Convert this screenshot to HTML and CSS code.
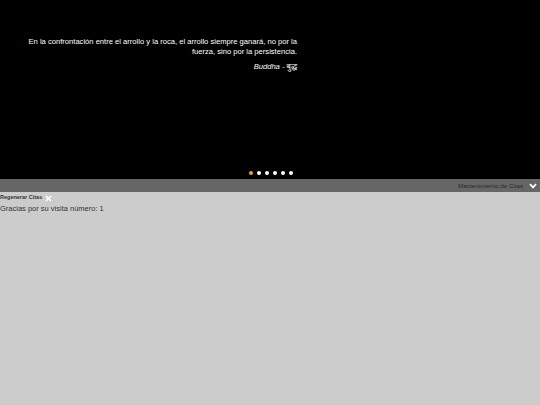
FILE: index.html
```html
<!DOCTYPE html>
<html>
<head>
<meta charset="utf-8">
<link rel="stylesheet" href="styles.css">
</head>
<body>
<div class="hero">
  <div class="quote">
    <p class="text">En la confrontación entre el arrollo y la roca, el arrollo siempre ganará, no por la fuerza, sino por la persistencia.</p>
    <p class="author">Buddha - बुद्ध</p>
  </div>
  <div class="dots">
    <span class="dot active"></span>
    <span class="dot"></span>
    <span class="dot"></span>
    <span class="dot"></span>
    <span class="dot"></span>
    <span class="dot"></span>
  </div>
</div>
<div class="bar">
  <span class="bar-label">Mantenimiento de Citas</span>
  <svg class="chev" width="8" height="6" viewBox="0 0 8 6"><path d="M1 1.2 L4 4.4 L7 1.2" fill="none" stroke="#fff" stroke-width="1.8"/></svg>
</div>
<div class="content">
  <div class="regen">
    <span class="regen-label">Regenerar Citas</span>
    <svg class="close" width="7" height="7" viewBox="0 0 7 7"><path d="M1 1 L6 6 M6 1 L1 6" stroke="#fff" stroke-width="1.6"/></svg>
  </div>
  <p class="visits">Gracias por su visita número: 1</p>
</div>
</body>
</html>
```
FILE: styles.css
```css
html, body {
  margin: 0;
  padding: 0;
  background: #cccccc;
  font-family: "Liberation Sans", Arial, "Noto Sans", sans-serif;
}
.hero {
  background: #000;
  height: 179px;
  display: flex;
  flex-direction: column;
  box-sizing: border-box;
  padding-top: 37px;
}
.quote {
  width: 290px;
  margin-left: 7px;
  text-align: right;
  color: #fff;
  font-size: 7.6px;
}
.quote .text {
  margin: 0;
  line-height: 10px;
}
.quote .author {
  margin: 5px 0 0;
  font-style: italic;
  line-height: 10px;
}
.dots {
  margin-top: auto;
  margin-bottom: 4px;
  display: flex;
  gap: 4px;
  padding-left: 249px;
}
.dot {
  width: 4px;
  height: 4px;
  border-radius: 50%;
  background: #fff;
}
.dot.active {
  background: #f0a030;
}
.bar {
  background: #666666;
  height: 13px;
  display: flex;
  align-items: center;
  justify-content: flex-end;
  padding-right: 3px;
  gap: 6px;
}
.bar-label {
  font-size: 6.2px;
  color: #2a2a2a;
}
.chev {
  display: block;
}
.content {
  padding: 1px 0 0 0;
}
.regen {
  display: flex;
  align-items: center;
  gap: 3px;
  height: 8px;
}
.regen-label {
  font-size: 5.5px;
  font-weight: bold;
  color: #333;
}
.close {
  display: block;
  margin-top: 2px;
}
.visits {
  margin: 3px 0 0;
  font-size: 7.5px;
  color: #333;
  line-height: 10px;
}
```
